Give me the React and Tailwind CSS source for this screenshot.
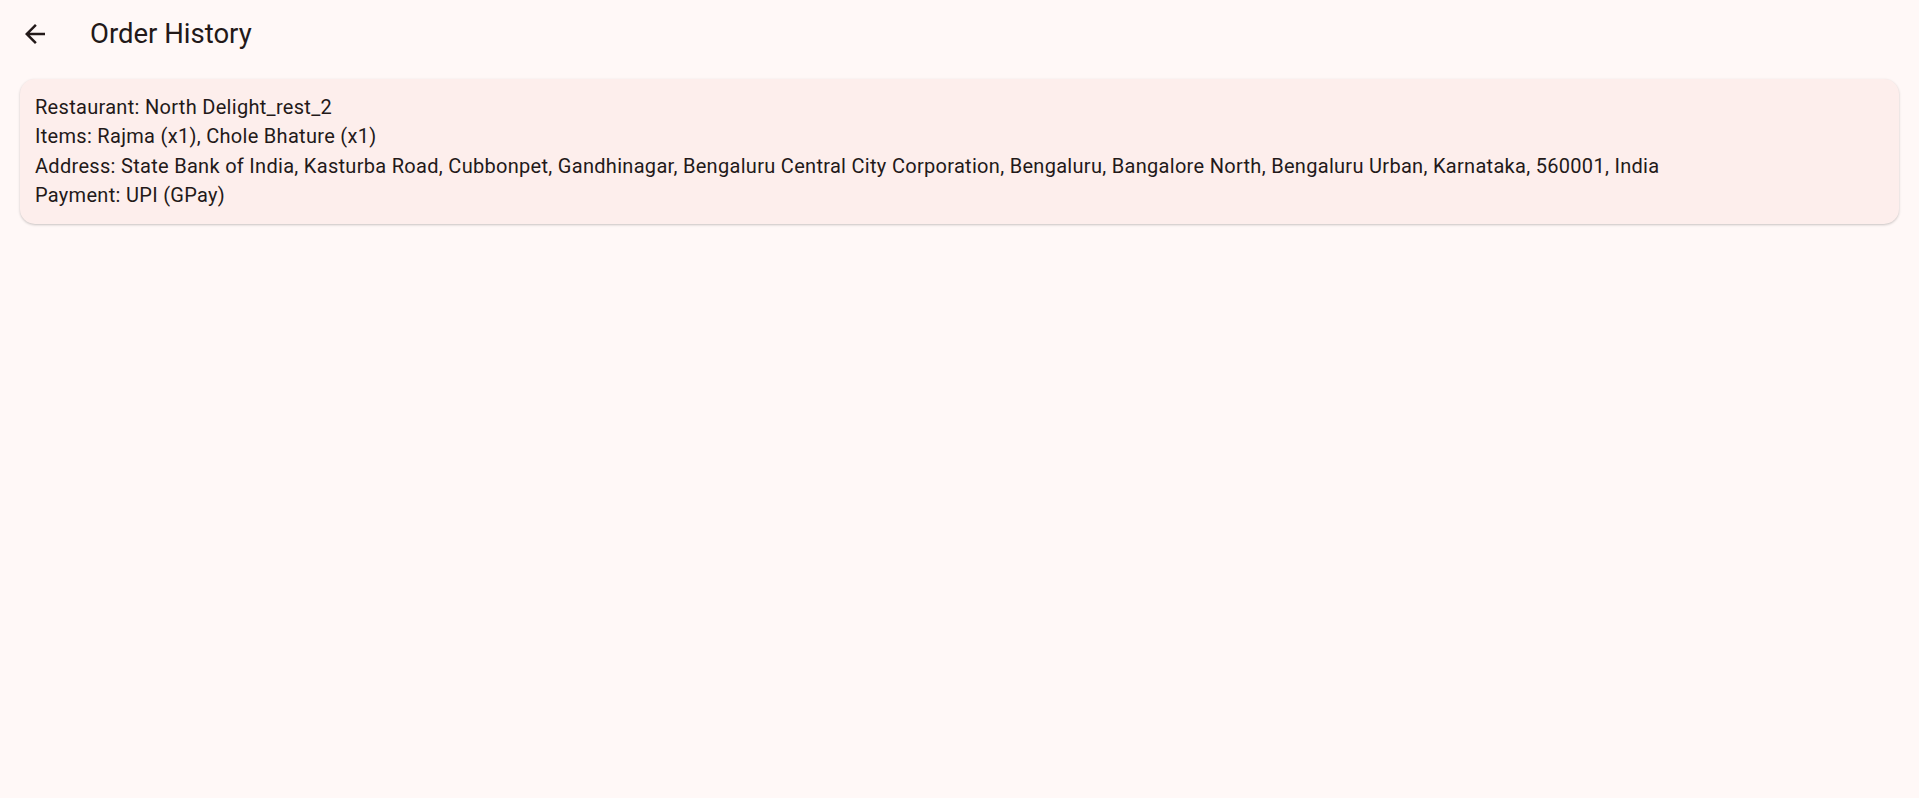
import React from 'react';

const order = {
    restaurant: 'North Delight_rest_2',
    items: 'Rajma (x1), Chole Bhature (x1)',
    address: 'State Bank of India, Kasturba Road, Cubbonpet, Gandhinagar, Bengaluru Central City Corporation, Bengaluru, Bangalore North, Bengaluru Urban, Karnataka, 560001, India',
    payment: 'UPI (GPay)',
};

const App = () => {
    return (
        <div className="min-h-screen bg-[#fff8f7] text-[#231919] font-['Roboto',sans-serif]">
            {/* App bar */}
            <div className="h-[70px] flex items-center">
                <button className="w-[70px] h-[70px] flex items-center justify-center pb-[2px]">
                    <svg width="30" height="30" viewBox="0 0 24 24" fill="#231919">
                        <path d="M20 11H7.83l5.59-5.59L12 4l-8 8 8 8 1.41-1.41L7.83 13H20v-2z" />
                    </svg>
                </button>
                <h1 className="ml-[20px] mb-[4px] text-[27.5px] leading-[35px] font-normal">Order History</h1>
            </div>

            {/* Orders */}
            <div className="px-[20px] pt-[9px]">
                <div className="bg-[#fdeeec] rounded-[15px] px-[15px] py-[13.5px] shadow-[0_1px_2.5px_rgba(0,0,0,0.22)] text-[20px] leading-[29.5px] tracking-[0.3px]">
                    <p>Restaurant: {order.restaurant}</p>
                    <p>Items: {order.items}</p>
                    <p>Address: {order.address}</p>
                    <p>Payment: {order.payment}</p>
                </div>
            </div>
        </div>
    );
};

export default App;
